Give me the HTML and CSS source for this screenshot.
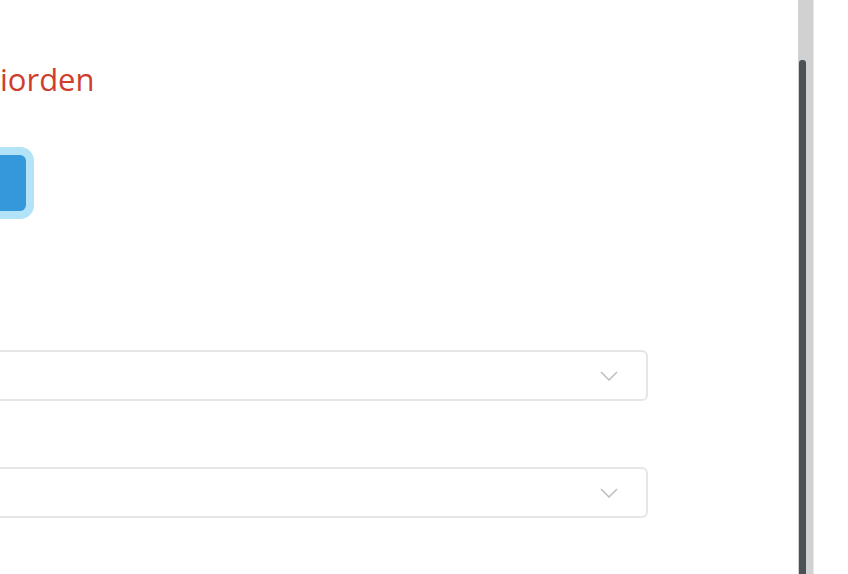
FILE: index.html
```html
<!DOCTYPE html>
<html>
<head>
<meta charset="utf-8">
<link rel="stylesheet" href="styles.css">
</head>
<body>
<div class="frame">
  <main class="content">
    <h1 class="title">iorden</h1>
    <div class="btn-row">
      <button class="btn" type="button"></button>
    </div>
    <div class="field">
      <div class="select">
        <svg class="chev" width="18" height="10" viewBox="0 0 18 10"><path d="M1 1 L9 9 L17 1" fill="none" stroke="#bdbdbd" stroke-width="1.5"/></svg>
      </div>
    </div>
    <div class="field">
      <div class="select">
        <svg class="chev" width="18" height="10" viewBox="0 0 18 10"><path d="M1 1 L9 9 L17 1" fill="none" stroke="#bdbdbd" stroke-width="1.5"/></svg>
      </div>
    </div>
  </main>
  <div class="scrollbar"><div class="thumb"></div></div>
  <div class="rest"></div>
</div>
</body>
</html>
```
FILE: styles.css
```css
html, body {
  margin: 0;
  padding: 0;
  background: #fff;
  height: 100%;
  overflow: hidden;
}
.frame {
  display: flex;
  height: 574px;
}
.content {
  width: 798px;
  flex: none;
  overflow: hidden;
  font-family: "Open Sans", sans-serif;
}
.title {
  margin: 58px 0 0 0;
  font-size: 31px;
  font-weight: 400;
  line-height: 42px;
  color: #cf3d2c;
}
.btn-row {
  margin-top: 55px;
  margin-left: -60px;
}
.btn {
  display: block;
  width: 86px;
  height: 56px;
  border: 0;
  border-radius: 6px;
  background: #3498db;
  box-shadow: 0 0 0 8px #b3e3f7;
  padding: 0;
}
.field {
  margin-left: -30px;
}
.btn-row + .field {
  margin-top: 139px;
}
.field + .field {
  margin-top: 66px;
}
.select {
  box-sizing: border-box;
  width: 678px;
  height: 51px;
  border: 2px solid #e6e6e6;
  border-radius: 6px;
  display: flex;
  align-items: center;
  justify-content: flex-end;
  padding-right: 28px;
}
.chev {
  display: block;
  margin-top: 1px;
}
.scrollbar {
  flex: none;
  width: 16px;
  background: #d1d1d1;
  display: flex;
  flex-direction: column;
  box-sizing: border-box;
  padding-left: 1px;
  border-right: 1px solid #e8e8e8;
}
.thumb {
  margin-top: 60px;
  width: 7px;
  flex: 1;
  background: #4c5156;
  border-radius: 3px 3px 0 0;
}
.rest {
  flex: 1;
  background: #fff;
}
```
